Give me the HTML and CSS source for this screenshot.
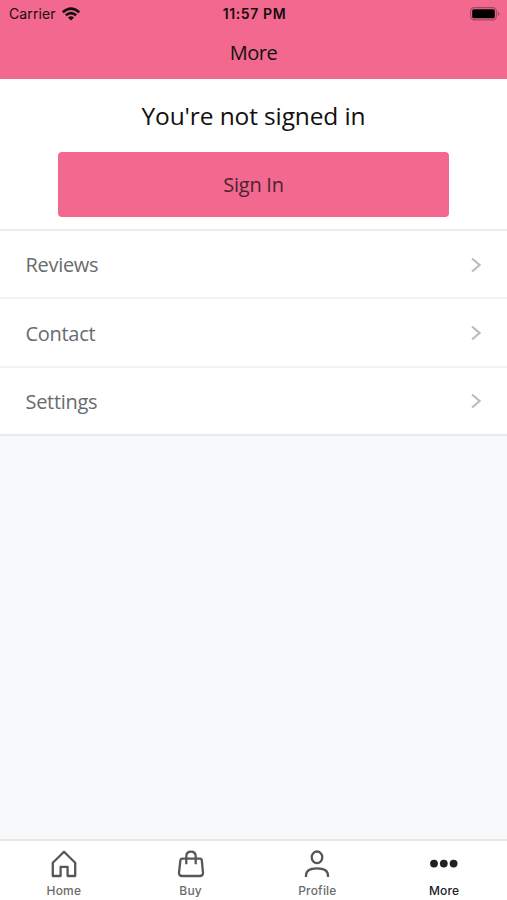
FILE: index.html
```html
<!DOCTYPE html>
<html lang="en">
<head>
<meta charset="utf-8">
<title>More</title>
<link rel="stylesheet" href="styles.css">
</head>
<body>
<header class="header">
  <div class="status">
    <div class="carrier"><span>Carrier</span>
      <svg class="wifi" viewBox="0 0 18 14"><path d="M.8 5.3Q9-2.2 17.2 5.3M3.8 8.3Q9 3.8 14.2 8.3" fill="none" stroke="#160d10" stroke-width="2.6"/><path d="M6 10.5Q9 8.1 12 10.5L9 13.6Z" fill="#160d10"/></svg>
    </div>
    <div class="time">11:57 PM</div>
    <svg class="battery" viewBox="0 0 30 14"><rect x=".6" y=".6" width="25.8" height="12.3" rx="3.6" fill="none" stroke="#a1485f" stroke-width="1.1"/><rect x="2.2" y="2.2" width="22.6" height="9.1" rx="1.6" fill="#000"/><path d="M27.8 4.6q1.6.5 1.6 2.2t-1.6 2.2z" fill="#a1485f"/></svg>
  </div>
  <h1 class="title">More</h1>
</header>
<section class="account">
  <h2 class="message">You're not signed in</h2>
  <button class="signin">Sign In</button>
</section>
<nav class="list">
  <a class="row"><span>Reviews</span><svg class="chevron" viewBox="0 0 10 16"><path d="M1 1.5L8.5 8L1 14.5"/></svg></a>
  <a class="row"><span>Contact</span><svg class="chevron" viewBox="0 0 10 16"><path d="M1 1.5L8.5 8L1 14.5"/></svg></a>
  <a class="row"><span>Settings</span><svg class="chevron" viewBox="0 0 10 16"><path d="M1 1.5L8.5 8L1 14.5"/></svg></a>
</nav>
<footer class="tabs">
  <a class="tab"><svg class="icon" viewBox="0 0 30 30"><path d="M3.8 13.7L15 2.7L26.2 13.7V27H18.6V17.8H11.6V27H3.8Z"/></svg><span>Home</span></a>
  <a class="tab"><svg class="icon" viewBox="0 0 30 30"><path d="M7 9.7H24Q25.6 9.7 25.8 11.3L27 23.6Q27.2 27 23.8 27H6.2Q2.8 27 3 23.6L4.4 11.3Q4.6 9.7 6 9.7ZM10.3 15.2V7.5Q10.3 2.7 15 2.7T19.7 7.5V15.2"/></svg><span>Buy</span></a>
  <a class="tab"><svg class="icon" viewBox="0 0 30 30"><ellipse cx="15" cy="8.3" rx="5.3" ry="5.8"/><path d="M4 28V26.5Q4 19.3 15 19.3T26 26.5V28"/></svg><span>Profile</span></a>
  <a class="tab active"><svg class="icon" viewBox="0 0 30 30"><g class="dots"><circle cx="5" cy="14.6" r="3.9"/><circle cx="14.8" cy="14.6" r="3.9"/><circle cx="24.6" cy="14.6" r="3.9"/></g></svg><span>More</span></a>
</footer>
</body>
</html>
```
FILE: styles.css
```css
* { box-sizing: border-box; }
body { margin: 0; height: 900px; display: flex; flex-direction: column; background: #f7f9fb; font-family: "Open Sans", sans-serif; color: #111; }
.header { height: 79px; background: #f2688f; }
.status { height: 27px; display: grid; grid-template-columns: 1fr auto 1fr; align-items: center; padding: 0 7px 0 9px; font-family: Inter, sans-serif; font-size: 14px; color: #160d10; }
.carrier { display: flex; align-items: center; gap: 6px; letter-spacing: .1px; }
.wifi { width: 18px; height: 14px; }
.time { font-weight: 600; letter-spacing: .6px; }
.battery { width: 30px; height: 14px; justify-self: end; }
.title { margin: 0; font-size: 20px; line-height: 52px; font-weight: 400; text-align: center; letter-spacing: -.5px; }
.account { height: 150px; background: #fff; display: flex; flex-direction: column; align-items: center; padding-top: 18px; }
.message { margin: 0; font-size: 24.5px; line-height: 37px; font-weight: 400; letter-spacing: -.12px; color: #111; }
.signin { margin-top: 18px; width: 391px; height: 65px; border: 0; border-radius: 4px; background: #f2688f; font: 400 20px "Open Sans", sans-serif; letter-spacing: -.25px; color: #4b2431; }
.list { background: #fff; border-top: 2px solid #ebeced; }
.row { height: 68.4px; padding: 1px 26px 0 25.5px; display: flex; align-items: center; justify-content: space-between; font-size: 20px; letter-spacing: -.3px; color: #696b6d; border-bottom: 2px solid #f3f4f5; }
.row:last-child { border-color: #e9ebec; }
.chevron { width: 10px; height: 16px; fill: none; stroke: #bdbdbd; stroke-width: 2.2; }
.tabs { height: 61px; margin-top: auto; background: #fff; border-top: 2px solid #e4e6e7; display: grid; grid-template-columns: repeat(4, 1fr); }
.tab { display: flex; flex-direction: column; align-items: center; padding: 8px 0 0 1px; font-family: Inter, sans-serif; font-size: 12px; line-height: 17px; font-weight: 500; letter-spacing: .2px; color: #6a6c6e; }
.tab span { margin-top: 3px; }
.icon { width: 30px; height: 30px; fill: none; stroke: #55585a; stroke-width: 2.3; stroke-linejoin: round; }
.dots { fill: #202124; stroke: none; }
.tab.active { color: #202124; }
```
